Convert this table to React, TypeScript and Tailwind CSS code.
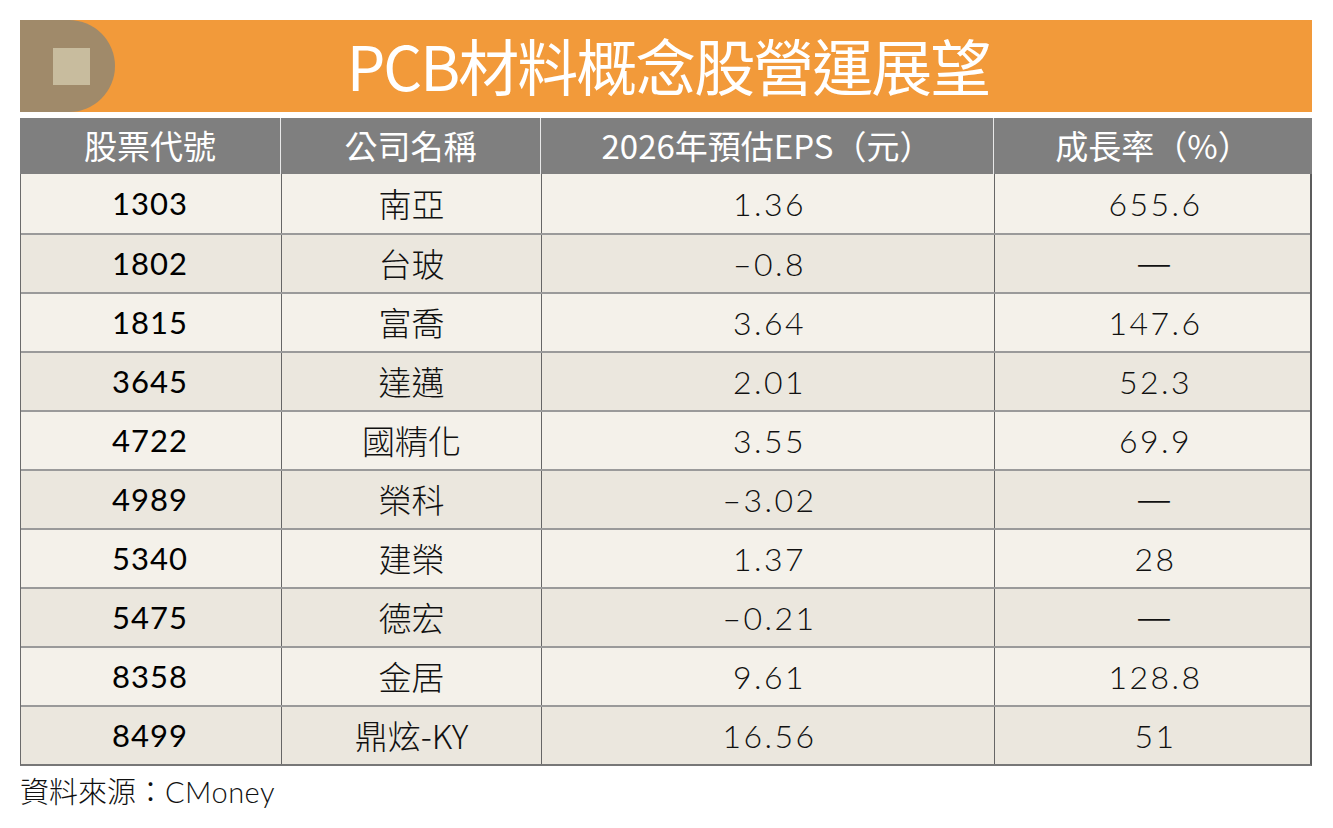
const rows = [
  ['1303', '南亞', '1.36', '655.6'],
  ['1802', '台玻', '–0.8', '—'],
  ['1815', '富喬', '3.64', '147.6'],
  ['3645', '達邁', '2.01', '52.3'],
  ['4722', '國精化', '3.55', '69.9'],
  ['4989', '榮科', '–3.02', '—'],
  ['5340', '建榮', '1.37', '28'],
  ['5475', '德宏', '–0.21', '—'],
  ['8358', '金居', '9.61', '128.8'],
  ['8499', '鼎炫-KY', '16.56', '51'],
]

const headers = ['股票代號', '公司名稱', '2026年預估EPS（元）', '成長率（%）']

function cellClass(ci: number, value: string) {
  if (ci === 0) return "text-[31px] tracking-[1px] font-normal text-black -ml-[2px]"
  if (ci === 1) return "border-l border-[#666] text-[33px] font-light font-['Noto_Sans_CJK_TC',sans-serif]"
  if (value === '—') return "border-l border-[#666] text-[40px] leading-none font-light font-['Noto_Sans_CJK_TC',sans-serif]"
  return "border-l border-[#666] text-[32px] tracking-[2.5px] pl-[3px] font-light"
}

export default function App() {
  return (
    <div className="w-[1333px] h-[828px] bg-white pt-5 pl-5 font-['Lato','Noto_Sans_CJK_TC',sans-serif]">
      <div className="w-[1292px]">
        {/* title banner */}
        <div className="relative h-[92px] bg-[#f29a3a] flex items-center justify-center">
          <div className="absolute left-0 top-0 h-[92px] w-[95px] rounded-r-[46px] bg-[#a08a6a] flex items-center">
            <div className="ml-[33px] w-[37px] h-[37px] bg-[#c8bc9e]" />
          </div>
          <h1 className="text-white text-[61px] font-normal tracking-[-2px] leading-none font-['Noto_Sans_CJK_TC',sans-serif] -mt-[4px] ml-[4px]">
            PCB材料概念股營運展望
          </h1>
        </div>

        {/* header */}
        <div className="mt-[6px] grid grid-cols-[260px_260px_453px_319px] h-[56px] bg-[#7f7f7f]">
          {headers.map((h, i) => (
            <div
              key={h}
              className={`flex items-center justify-center text-white text-[33px] font-normal font-['Noto_Sans_CJK_TC',sans-serif] ${i > 0 ? 'border-l border-[#e8e8e8]' : ''}`}
            >
              {h}
            </div>
          ))}
        </div>

        {/* body */}
        <div className="border-l border-r-2 border-b-2 border-l-[#6b6b6b] border-r-[#5c5c5c] border-b-[#777]">
          {rows.map((r, ri) => (
            <div
              key={r[0]}
              className={`grid grid-cols-[260px_260px_453px_319px] h-[59px] ${ri > 0 ? 'border-t-2 border-[#9a9a9a]' : ''} ${ri % 2 === 0 ? 'bg-[#f4f1ea]' : 'bg-[#ebe7de]'}`}
            >
              {r.map((c, ci) => (
                <div key={ci} className={`flex items-center justify-center text-[#111] ${cellClass(ci, c)}`}>
                  {c === '—' ? <span className="-translate-y-[4px]">{c}</span> : c}
                </div>
              ))}
            </div>
          ))}
        </div>

        <div className="mt-[10px] text-[29px] text-[#111] font-light leading-none font-['Noto_Sans_CJK_TC',sans-serif]">
          資料來源：<span className="font-['Lato',sans-serif] tracking-[0.5px]">CMoney</span>
        </div>
      </div>
    </div>
  )
}
